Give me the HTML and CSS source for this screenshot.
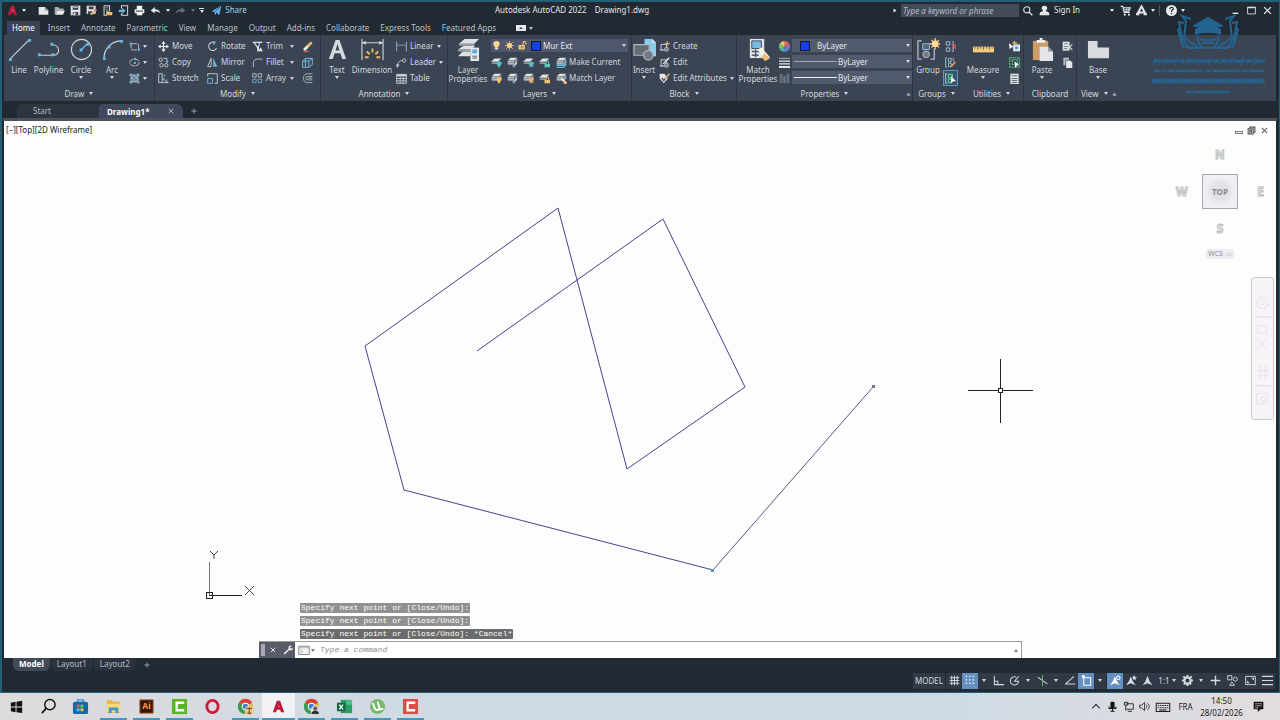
FILE: index.html
```html
<!DOCTYPE html>
<html lang="en">
<head>
<meta charset="utf-8">
<meta name="viewport" content="width=device-width, initial-scale=1">
<title>Autodesk AutoCAD 2022 - Drawing1.dwg</title>
<link rel="stylesheet" href="styles.css">
</head>
<body>
<svg class="sprite" aria-hidden="true">
  <symbol id="new" viewBox="0 0 16 16"><path fill="#e4e7ea" d="M1 3h9l5 5v6H1z"/><path fill="#8d949c" d="M10 3v5h5z"/></symbol>
  <symbol id="open" viewBox="0 0 16 16"><path fill="#aab0b7" d="M1 3h5l2 2h6v3H5l-3 6H1z"/><path fill="#e8eaec" d="M5 8h11l-3 6H2z"/></symbol>
  <symbol id="save" viewBox="0 0 16 16"><path fill="#dfe2e5" d="M1 1h14v14H1z"/><path fill="#39424f" d="M4 2h8v5H4zM4 10h8v5H4z"/><path fill="#dfe2e5" d="M5 11h3v4H5zM5 3h6v1H5z"/></symbol>
  <symbol id="saveas" viewBox="0 0 16 16"><path fill="#dfe2e5" d="M1 1h13v12H1z"/><path fill="#39424f" d="M4 2h7v4H4zM3 9h6v4H3z"/><path stroke="#e8b678" stroke-width="3" d="M7 14l7-7"/><path stroke="#e36a5c" stroke-width="3" d="M13 8l2-2"/></symbol>
  <symbol id="cloudopen" viewBox="0 0 16 16"><path fill="none" stroke="#cfd4d9" stroke-width="1.5" d="M3 1h8v8M3 1v14h4"/><path stroke="#cfd4d9" d="M5 4h4M5 7h4"/><path fill="#e9bd73" d="M6 9h4l1 1h4v5H6z"/></symbol>
  <symbol id="cloudsave" viewBox="0 0 16 16"><path fill="none" stroke="#cfd4d9" stroke-width="1.5" d="M5 5V1h9v14H5v-3"/><path fill="#68b5df" d="M1 7h5V4l5 4-5 5v-3H1z"/></symbol>
  <symbol id="print" viewBox="0 0 16 16"><path fill="#f0f1f2" d="M4 1h8v5H4zM1 6h14v6H1z"/><path fill="#55606c" d="M3 8h10v2H3z"/><path fill="#f0f1f2" d="M4 10h8v5H4z"/></symbol>
  <symbol id="undo" viewBox="0 0 16 16"><path fill="currentColor" d="M1 8l6-5v3c5 0 7 2 8 6-2-2-4-3-8-3v3z"/></symbol>
  <symbol id="redo" viewBox="0 0 16 16"><path fill="currentColor" d="M15 8L9 3v3c-5 0-7 2-8 6 2-2 4-3 8-3v3z"/></symbol>
  <symbol id="plane" viewBox="0 0 16 16"><path fill="#61b2ee" d="M1 9L15 1l-3 14-4-4-2 4-1-5z"/><path stroke="#24445e" d="M6 10l7-7"/></symbol>
  <symbol id="logo" viewBox="0 0 16 16"><path fill="#b91c38" d="M1 15L6 1h4l5 14h-4l-1-3H6l-1 3z"/><path fill="#e34c5d" d="M8 5l2 4H7z"/></symbol>
  <symbol id="mag" viewBox="0 0 16 16"><circle cx="7" cy="7" r="4.5" fill="none" stroke="currentColor" stroke-width="1.6"/><path stroke="currentColor" stroke-width="2" d="M10 10l5 5"/></symbol>
  <symbol id="user" viewBox="0 0 16 16"><path fill="currentColor" d="M8 1c6 0 4 6 2 7 0 2 5 1 5 5v2H1v-2c0-4 5-3 5-5-2-1-4-7 2-7z"/></symbol>
  <symbol id="cart" viewBox="0 0 16 16"><path fill="none" stroke="currentColor" stroke-width="1.6" d="M1 2h3l2 9h8M5 4h10l-2 5H6"/><path stroke="currentColor" d="M6 6.500h8M9 4v5M12 4v5"/><circle cx="7" cy="14" r="1.500" fill="currentColor"/><circle cx="13" cy="14" r="1.500" fill="currentColor"/></symbol>
  <symbol id="aapp" viewBox="0 0 16 16"><path fill="none" stroke="currentColor" stroke-width="3" d="M2 13L8 2l6 11M4 11h8"/><path fill="currentColor" d="M0 12h5v3H0zM11 12h5v3h-5z"/></symbol>
  <symbol id="help" viewBox="0 0 16 16"><circle cx="8" cy="8" r="8" fill="#e9ebed"/><path fill="none" stroke="#27303b" stroke-width="1.800" d="M5.500 6c0-4 6-3 5 0-1 1-2.500 1.500-2.500 4M8 11.500v2"/></symbol>
  <symbol id="close" viewBox="0 0 16 16"><path stroke="currentColor" stroke-width="2.500" d="M2 2l12 12M14 2L2 14"/></symbol>
  <symbol id="max" viewBox="0 0 16 16"><path fill="none" stroke="currentColor" stroke-width="1.500" d="M1 2h14v12H1z"/><path stroke="currentColor" stroke-width="2" d="M1 3h14"/></symbol>
  <symbol id="min" viewBox="0 0 16 16"><path stroke="currentColor" stroke-width="2.500" d="M3 13h10"/></symbol>

  <symbol id="line" viewBox="0 0 24 24"><path stroke="#ccd2d8" stroke-width="1.200" d="M2 22L22 2"/><path fill="#63b6e6" d="M1 21h3v3H1zM21 1h3v3h-3z"/></symbol>
  <symbol id="pline" viewBox="0 0 24 24"><path fill="none" stroke="#ccd2d8" stroke-width="1.200" d="M2 18h15c8 0 7-11-1-11"/><path fill="#63b6e6" d="M1 16h3v3H1zM15 16h3v3h-3zM14 5h3v3h-3z"/></symbol>
  <symbol id="circle" viewBox="0 0 24 24"><circle cx="12" cy="12" r="10.500" fill="none" stroke="#ccd2d8" stroke-width="1.200"/><path stroke="#63b6e6" stroke-width="1.500" d="M12 12l6-6"/><path fill="#63b6e6" d="M10 11h3v3h-3zM17 5h3v3h-3z"/></symbol>
  <symbol id="arc" viewBox="0 0 24 24"><path fill="none" stroke="#ccd2d8" stroke-width="1.200" d="M3 22C3 11 11 3 22 3"/><path fill="#63b6e6" d="M2 20h3v3H2zM7 8h3v3H7zM20 2h3v3h-3z"/></symbol>
  <symbol id="rect" viewBox="0 0 16 16"><path fill="none" stroke="#ccd2d8" stroke-width="1.200" d="M3 4h11v9H3z" stroke-dasharray="9 2"/><path fill="#63b6e6" d="M1 2h3v3H1zM13 11h3v3h-3z"/></symbol>
  <symbol id="ellipse" viewBox="0 0 16 16"><ellipse cx="8" cy="8" rx="7" ry="5" fill="none" stroke="#ccd2d8" stroke-width="1.200" stroke-dasharray="8 1"/><path fill="#63b6e6" d="M7 7h3v3H7zM7 1h3v3H7z"/></symbol>
  <symbol id="hatch" viewBox="0 0 16 16"><path fill="#426b8c" d="M3 3h10v10H3z"/><path fill="none" stroke="#cbe4f4" d="M3 0v16M13 0v16M0 3h16M0 13h16M3 9l6-6M4 13l9-9M9 13l4-4M3 6l7 7M6 3l7 7"/></symbol>
  <symbol id="move" viewBox="0 0 16 16"><path stroke="#edf0f2" stroke-width="1.800" d="M8 2v12M2 8h12"/><path fill="#edf0f2" d="M8 0l3 4H5zM8 16l-3-4h6zM0 8l4-3v6zM16 8l-4 3V5z"/></symbol>
  <symbol id="copy" viewBox="0 0 16 16"><g fill="none" stroke="#ccd2d8" stroke-width="1.300"><circle cx="4" cy="4" r="2.500"/><circle cx="5" cy="12" r="2.500"/><circle cx="12" cy="12" r="2.500"/><path d="M8 2h5v5"/></g><path fill="#63b6e6" d="M10 6h6l-3 3z"/></symbol>
  <symbol id="stretch" viewBox="0 0 16 16"><path fill="none" stroke="#ccd2d8" stroke-width="1.300" d="M1 1h5v13H1zM6 8l9 6H6"/><path stroke="#63b6e6" d="M9 1v9M6 4h5M13 9v6" stroke-dasharray="2 1"/></symbol>
  <symbol id="rotate" viewBox="0 0 16 16"><path fill="none" stroke="#ccd2d8" stroke-width="1.500" d="M7 2a6 6 0 107 8"/><path fill="#73bfe9" d="M7 0l6 1-3 5z"/></symbol>
  <symbol id="mirror" viewBox="0 0 16 16"><path fill="none" stroke="#ccd2d8" stroke-width="1.300" d="M6 2v12H1z"/><path fill="#65b8e7" d="M9 1l6 13H9z"/></symbol>
  <symbol id="scale" viewBox="0 0 16 16"><path fill="none" stroke="#ccd2d8" stroke-width="1.300" d="M1 5V1h14v14h-4"/><path fill="none" stroke="#71bde8" stroke-width="1.300" d="M1 8h7v7H1z"/></symbol>
  <symbol id="trim" viewBox="0 0 16 16"><path stroke="#e0e3e6" stroke-width="1.500" d="M1 2h14M3 2l8 12M11 2L8 15"/><path fill="none" stroke="#eef0f2" stroke-width="2" d="M8 8l2 6h4l-2-4"/></symbol>
  <symbol id="fillet" viewBox="0 0 16 16"><path fill="none" stroke="#bfc6cc" stroke-width="1.300" d="M2 15V9c0-4 3-6 6-6h7"/></symbol>
  <symbol id="array" viewBox="0 0 16 16"><g fill="none" stroke="#b9c2ca" stroke-width="1.300"><path d="M1 1h5v5H1zM9 1h5v5H9z"/><path stroke="#6caed4" d="M1 9h5v5H1zM9 9h5v5H9z"/></g></symbol>
  <symbol id="erase" viewBox="0 0 16 16"><path stroke="#f1bd6a" stroke-width="4" d="M6 10l8-8"/><path stroke="#f0f0ed" stroke-width="4" d="M3 13l5-5"/><path stroke="#e0665a" stroke-width="2" d="M2 15h7"/></symbol>
  <symbol id="explode" viewBox="0 0 16 16"><path fill="none" stroke="#79bce0" stroke-width="1.400" d="M1 6h9v9H1zM1 6l4-4h10v9l-5 4M10 6l5-4M5 2v13"/></symbol>
  <symbol id="offset" viewBox="0 0 16 16"><path fill="none" stroke="#aeb9c3" stroke-width="1.300" d="M15 1H8C0 1 0 14 8 14h7M15 5H9c-5 0-5 5 0 5h6M15 7.500H8"/></symbol>
  <symbol id="textA" viewBox="0 0 24 24"><path fill="#d7dbdf" fill-rule="evenodd" d="M3 22L10 2h4l7 20h-4l-2-6H9l-2 6zM10 13h4l-2-7z"/></symbol>
  <symbol id="dim" viewBox="0 0 24 24"><path fill="none" stroke="#ccd2d8" stroke-width="1.200" d="M1 1v22M23 1v22M1 5h22"/><path fill="#d9dde0" d="M1 5l4-2v4zM23 5l-4-2v4z"/><path stroke="#efb969" stroke-width="2" d="M12 11v4M6 14l3 3M18 14l-3 3M4 20h4M16 20h4"/></symbol>
  <symbol id="linear" viewBox="0 0 16 16"><path fill="none" stroke="#b9c1c8" stroke-width="1.200" d="M1 1v14M15 1v14"/><path stroke="#72b5dc" stroke-width="1.200" d="M2 6h12"/></symbol>
  <symbol id="leader" viewBox="0 0 16 16"><path fill="none" stroke="#ccd2d8" stroke-width="1.300" d="M2 14c0-6 3-8 7-9"/><circle cx="12" cy="5" r="2.500" fill="none" stroke="#ccd2d8" stroke-width="1.300"/><path fill="#ccd2d8" d="M0 11h5l-3 5z"/></symbol>
  <symbol id="table" viewBox="0 0 16 16"><path fill="none" stroke="#ccd2d8" stroke-width="1.300" d="M1 2h14v13H1zM1 8h14M1 11.500h14M6 5v10M10.500 5v10"/><path stroke="#ccd2d8" stroke-width="3" d="M1 3.500h14"/></symbol>
  <symbol id="layers" viewBox="0 0 24 24"><path fill="#e0e3e5" d="M8 1h15l-5 5H2zM7 8h12l-4 4H1zM6 14h8v5H1z"/><path fill="#9ba2a9" d="M2 6h16v2H2zM1 12h13v2H1z"/><path fill="#e6e8ea" d="M14 10h9v14h-9z"/><path fill="#5ea9d6" d="M16 12h5v4h-5z"/><path stroke="#59626e" d="M16 19h5M16 21h5"/></symbol>
  <symbol id="bulb" viewBox="0 0 16 16"><path fill="#ffd58b" d="M8 0c7 0 7 7 3 10v2H5v-2C1 7 1 0 8 0z"/><path fill="#dce0e4" d="M5 12h6v3H5z"/></symbol>
  <symbol id="sun" viewBox="0 0 16 16"><path stroke="#f1b763" stroke-width="1.500" d="M8 0v16M0 8h16M2 2l12 12M14 2L2 14"/><circle cx="8" cy="8" r="4.500" fill="#ffd28a"/></symbol>
  <symbol id="lock" viewBox="0 0 16 16"><path fill="#f6c575" d="M1 7h11v8H1z"/><path fill="none" stroke="#f6c575" stroke-width="2" d="M9 7V4c0-4 5-4 5 0v2"/><path fill="#4c4e55" d="M6 9h2v4H6z"/></symbol>
  <symbol id="layer" viewBox="0 0 16 16"><path fill="#dfe2e5" d="M5 2h10l-5 5H0z"/><path fill="#9ca4ac" d="M1 8h9v2H1z"/></symbol>
  <symbol id="layer2" viewBox="0 0 16 16"><path fill="#dfe2e5" d="M5 1h10l-4 4H1zM1 6h10v2H1zM1 9h10v2H1z"/><path fill="#9ba2a9" d="M12 5l3-3v6l-4 4z"/></symbol>
  <symbol id="a-teal" viewBox="0 0 16 16"><path fill="#4ec9c7" d="M12 6c5 1 4 5 1 7v2h-3v-2C7 10 8 6 12 6z"/></symbol>
  <symbol id="a-pencil" viewBox="0 0 16 16"><path stroke="#e6eaee" stroke-width="2" d="M9 14l5-5"/><path fill="#6c9cb8" d="M8 12h4v3H8z"/></symbol>
  <symbol id="a-star" viewBox="0 0 16 16"><path stroke="#62c6d5" stroke-width="1.500" d="M12 6v9M8 10h8M9 7l6 7M15 7l-6 7"/></symbol>
  <symbol id="a-gold" viewBox="0 0 16 16"><path fill="#f4c26f" d="M12 6c5 1 4 5 1 7v2h-3v-2C7 10 8 6 12 6z"/></symbol>
  <symbol id="a-sun" viewBox="0 0 16 16"><path stroke="#efba6b" stroke-width="1.500" d="M12 6v9M8 10h8M9 7l6 7M15 7l-6 7"/></symbol>
  <symbol id="a-lock" viewBox="0 0 16 16"><path fill="currentColor" d="M8 10h8v5H8z"/><path fill="none" stroke="currentColor" stroke-width="1.500" d="M10 10V8c0-3 4-3 4 0v2"/></symbol>
  <symbol id="a-check" viewBox="0 0 16 16"><path fill="none" stroke="#66b6dc" stroke-width="2" d="M1 12h10l4-5M1 15h10l4-5"/></symbol>
  <symbol id="a-brush" viewBox="0 0 16 16"><path stroke="#f3eee3" stroke-width="3" d="M8 8l7 7"/><path fill="#efb966" d="M12 10l4 5-5 1z"/></symbol>
  <symbol id="insert" viewBox="0 0 24 24"><path fill="#8fcaea" d="M12 1h8l4 4v14H12z"/><path fill="#d5e9f4" d="M20 1v4h4z"/><path fill="#656c76" stroke="#b1b7bd" stroke-width="1.300" d="M1 7h16v11H1z"/><circle cx="16" cy="18" r="5" fill="#727983" stroke="#b1b7bd" stroke-width="1.300"/></symbol>
  <symbol id="create" viewBox="0 0 16 16"><path fill="none" stroke="#ccd2d8" stroke-width="1.400" d="M3 5h8v8H3zM1 13h5"/><circle cx="11" cy="12" r="3" fill="#79828c" stroke="#ccd2d8"/><path stroke="#f4bd68" stroke-width="1.500" d="M12 0v7M8 4h8"/></symbol>
  <symbol id="edit" viewBox="0 0 16 16"><path fill="none" stroke="#ccd2d8" stroke-width="1.400" d="M3 4h8v9H3zM1 13h5"/><circle cx="11" cy="12" r="3" fill="#79828c" stroke="#ccd2d8"/><path stroke="#f1eee8" stroke-width="2" d="M6 10l9-9"/></symbol>
  <symbol id="tag" viewBox="0 0 16 16"><path fill="#e5e7e9" d="M1 1h7l5 7-6 7-6-7z"/><path fill="none" stroke="#424b59" stroke-width="2" d="M4 7l3 4 6-8"/><path stroke="#f0b66a" stroke-width="2" d="M9 9l6-8"/></symbol>
  <symbol id="match" viewBox="0 0 24 24"><path fill="#e1e4e6" d="M3 1h15v20H3z"/><path fill="#76bce0" stroke="#414c5a" d="M5 3h10v8H5z"/><path stroke="#505a66" stroke-width="1.500" d="M5 14h10M5 18h7M9 12v8"/><path fill="#f7f5ec" d="M11 12l4-2 9 10-5 4z"/><path fill="#edbb6d" d="M18 16l6 5-5 3-4-4z"/></symbol>
  <symbol id="wheel" viewBox="0 0 16 16"><path fill="#eb6657" d="M8 8V0a8 8 0 017 4z"/><path fill="#ab64b8" d="M8 8l7-4a8 8 0 010 8z"/><path fill="#5b83d0" d="M8 8l7 4a8 8 0 01-7 4z"/><path fill="#41b6a6" d="M8 8v8a8 8 0 01-7-4z"/><path fill="#76c365" d="M8 8l-7 4a8 8 0 010-8z"/><path fill="#f3c35c" d="M8 8L1 4a8 8 0 017-4z"/></symbol>
  <symbol id="weights" viewBox="0 0 16 16"><path stroke="#e2e5e8" d="M0 2h16"/><path stroke="#e2e5e8" stroke-width="2" d="M0 6h16M0 10h16"/><path stroke="#e2e5e8" stroke-width="3" d="M0 14.500h16"/></symbol>
  <symbol id="dimbars" viewBox="0 0 16 16"><path fill="#66707c" d="M1 1h4v14H1zM6 4h4v11H6zM11 1h4v14h-4z"/></symbol>
  <symbol id="group" viewBox="0 0 24 24"><path fill="none" stroke="#b8bfc6" stroke-width="1.300" d="M5 3H1v19h4M14 22h4V11"/><path fill="#4d6983" stroke="#96bbd5" d="M6 6h7v6H6z"/><circle cx="9.500" cy="17" r="3.500" fill="#747c86" stroke="#b8bfc6"/><path stroke="#f1b967" stroke-width="1.500" d="M19 0v12M13 6h12M15 2l8 8M23 2l-8 8"/><circle cx="19" cy="6" r="3.500" fill="#ffdf9b"/></symbol>
  <symbol id="g1" viewBox="0 0 16 16"><path fill="none" stroke="#9ec7df" stroke-width="1.300" d="M2 1h5v5H2zM2 10h5v5H2zM10 1h2v14h-2"/><path stroke="#e15b67" stroke-width="2" d="M10 5l6 6M16 5l-6 6"/></symbol>
  <symbol id="g2" viewBox="0 0 16 16"><path fill="none" stroke="#9ec7df" stroke-width="1.300" d="M3 1H1v14h2M5 2h4v5H5zM5 9h4v5H5zM12 1v5"/><path stroke="#e69a64" stroke-width="2.500" d="M9 14l6-7"/></symbol>
  <symbol id="g3" viewBox="0 0 16 16"><path fill="none" stroke="#c7d7df" stroke-width="1.300" d="M3 1H1v14h2"/><path fill="none" stroke="#65cc8c" stroke-width="1.500" d="M5 2h4v5H5zM5 9h4v5H5zM11 1v7"/><path fill="#fff" d="M9 5l7 7h-4l-3 3z"/></symbol>
  <symbol id="measure" viewBox="0 0 24 24"><path fill="#f3cc82" d="M1 9h22v6H1z"/><path stroke="#6b5942" d="M3 9v2M6 9v3M9 9v2M12 9v3M15 9v2M18 9v3M21 9v2"/></symbol>
  <symbol id="u1" viewBox="0 0 16 16"><path fill="#dee9ef" d="M6 5h10v10H6z"/><path fill="#559ac2" d="M9 8h4v4H9z"/><path fill="#fff" d="M0 3l7 6H4l-3 3z"/><path stroke="#efb969" stroke-width="2" d="M8 0v5M5 3h7"/></symbol>
  <symbol id="u2" viewBox="0 0 16 16"><path fill="none" stroke="#53be83" stroke-width="1.600" d="M1 1h14v14H1zM5 4v7h7V4z" stroke-dasharray="4 1"/><path fill="#fff" d="M8 6l7 6h-3l-3 4z"/></symbol>
  <symbol id="u3" viewBox="0 0 16 16"><path fill="#e0e3e6" d="M2 1h12v15H2z"/><path stroke="#505a68" stroke-width="1.300" d="M4 4h8M4 8h8M4 11h8M4 14h8"/></symbol>
  <symbol id="paste" viewBox="0 0 24 24"><path fill="#cf9c65" d="M2 3h16v20H2z"/><path fill="#eef0f1" d="M6 2h3V0h3v2h3v3H6z"/><path fill="#e3e5e8" d="M9 9h9l5 5v10H9z"/><path fill="#8c939c" d="M18 9v5h5z"/></symbol>
  <symbol id="cut" viewBox="0 0 16 16"><path fill="#e0e3e6" d="M1 1h10v13H1z"/><path stroke="#4d5764" d="M3 4h6M3 8h6M3 11h5"/><path stroke="#dce1e5" stroke-width="1.500" d="M7 5l8 8M15 5l-8 8"/></symbol>
  <symbol id="copyclip" viewBox="0 0 16 16"><path fill="#bac1c8" d="M2 1h8v3H5v8H2z"/><path fill="#e5e8ea" d="M6 5h6l3 3v8H6z"/></symbol>
  <symbol id="base" viewBox="0 0 24 24"><path fill="#d9dce0" d="M1 3h10v7h12v11H1z"/></symbol>

  <symbol id="grid" viewBox="0 0 16 16"><path stroke="currentColor" stroke-width="1.400" d="M4 1v14M8 1v14M12 1v14M1 4h14M1 8h14M1 12h14"/></symbol>
  <symbol id="dots" viewBox="0 0 16 16"><path stroke="currentColor" stroke-width="2" stroke-dasharray="2 3" d="M1 2h15M1 7h15M1 12h15"/></symbol>
  <symbol id="ortho" viewBox="0 0 16 16"><path fill="none" stroke="currentColor" stroke-width="1.500" d="M2 1v13h14M2 9h5v5"/></symbol>
  <symbol id="polar" viewBox="0 0 16 16"><path fill="none" stroke="currentColor" stroke-width="1.500" d="M10 3a6 6 0 104 6H8l6-7"/></symbol>
  <symbol id="iso" viewBox="0 0 16 16"><path stroke="currentColor" stroke-width="1.500" d="M1 3l14 10"/><path stroke="#69ab79" stroke-width="1.500" d="M8 0v16"/></symbol>
  <symbol id="angle" viewBox="0 0 16 16"><path fill="none" stroke="currentColor" stroke-width="1.500" d="M13 2L1 13h14"/></symbol>
  <symbol id="osnap" viewBox="0 0 16 16"><path fill="none" stroke="currentColor" stroke-width="1.500" d="M4 4h10v11H4z"/><path stroke="currentColor" stroke-width="2" d="M1 2h5M3 0v5"/></symbol>
  <symbol id="anno" viewBox="0 0 16 16"><path fill="currentColor" d="M8 1l3 8 4 6-7-3-7 3 4-6z"/></symbol>
  <symbol id="annodot" viewBox="0 0 16 16"><path fill="currentColor" d="M7 2l3 7 4 6-7-3-7 3 4-6z"/><circle cx="12" cy="4" r="2.500" fill="none" stroke="currentColor" stroke-width="1.500"/></symbol>
  <symbol id="annostar" viewBox="0 0 16 16"><path fill="currentColor" d="M7 2l3 7 4 6-7-3-7 3 4-6z"/><path fill="currentColor" d="M12 0l1 3h3l-2 2v3l-2-2-2 1V4l-1-2h2z"/></symbol>
  <symbol id="gear" viewBox="0 0 16 16"><circle cx="8" cy="8" r="4.500" fill="none" stroke="currentColor" stroke-width="3"/><path stroke="currentColor" stroke-width="3" stroke-dasharray="3 10" d="M8 0v16M0 8h16M2 2l12 12M14 2L2 14"/></symbol>
  <symbol id="plus" viewBox="0 0 16 16"><path stroke="currentColor" stroke-width="2" d="M8 1v14M1 8h14"/></symbol>
  <symbol id="shapes" viewBox="0 0 16 16"><path fill="none" stroke="currentColor" stroke-width="1.300" d="M1 1h6v6H1zM7 10l4 5H4z"/><circle cx="12" cy="6" r="3" fill="none" stroke="currentColor" stroke-width="1.300"/></symbol>
  <symbol id="clean" viewBox="0 0 16 16"><path fill="none" stroke="currentColor" stroke-width="1.400" d="M1 2h14v12H1z"/><path fill="currentColor" d="M9 4h4v4zM3 8l4 4H3z"/></symbol>
  <symbol id="menu" viewBox="0 0 16 16"><path stroke="currentColor" stroke-width="1.700" d="M0 2h16M0 8h16M0 14h16"/></symbol>
  <symbol id="wrench" viewBox="0 0 16 16"><path fill="currentColor" d="M1 13l8-7c-1-3 1-6 5-5l-3 3 2 2 3-2c0 4-3 6-6 4l-7 7z"/></symbol>
  <symbol id="prompt" viewBox="0 0 16 16"><path fill="#f4f4f4" stroke="#868686" stroke-width="1.300" d="M1 3h14v11H1z"/><path fill="none" stroke="#999" d="M1 5h14M3 8l3 2-3 2"/></symbol>
  <symbol id="mdi-max" viewBox="0 0 16 16"><path fill="none" stroke="#555" stroke-width="2" d="M2 5h9v9H2zM5 5V2h9v9h-3M5 8h3v3H5z"/></symbol>

  <symbol id="win" viewBox="0 0 18 18"><path fill="#111" d="M3 5l5-1v5H3zM9 4l6-1v6H9zM3 10h5v5l-5-1zM9 10h6v6l-6-1z"/></symbol>
  <symbol id="search" viewBox="0 0 18 18"><circle cx="10.500" cy="7" r="5.500" fill="none" stroke="#111" stroke-width="1.500"/><path stroke="#111" stroke-width="1.800" d="M6.500 11L2 16"/></symbol>
  <symbol id="store" viewBox="0 0 18 18"><path fill="none" stroke="#2599dc" stroke-width="1.500" d="M6 5V2h6v3"/><rect x="1" y="4" width="16" height="13" rx="2" fill="#1669a5"/><path fill="#e85c42" d="M5 7h3v3H5z"/><path fill="#78c247" d="M9 7h3v3H9z"/><path fill="#54c6ef" d="M5 11h3v3H5z"/><path fill="#fbc548" d="M9 11h3v3H9z"/></symbol>
  <symbol id="files" viewBox="0 0 18 18"><path fill="#e6b747" d="M2 2h5l2 2h7v12H2z"/><path fill="#f8da78" d="M2 6h14v9H2z"/><path fill="#4596c6" d="M4 16v-6h10v6h-3v-3H7v3z"/></symbol>
  <symbol id="ai" viewBox="0 0 18 18"><path fill="#35170e" stroke="#a55529" d="M2 2h14v14H2z"/><text x="9" y="12" text-anchor="middle" fill="#f39b43" font-family="Noto Sans" font-size="9" font-weight="700">Ai</text></symbol>
  <symbol id="camtasia" viewBox="0 0 18 18"><path fill="currentColor" d="M1 1h16v16H1z"/><path fill="none" stroke="#fff" stroke-width="2.500" d="M14 5H6v8h8"/></symbol>
  <symbol id="opera" viewBox="0 0 18 18"><ellipse cx="9" cy="9" rx="6" ry="6.500" fill="none" stroke="#cb1938" stroke-width="3"/></symbol>
  <symbol id="chrome" viewBox="0 0 18 18"><circle cx="9" cy="9" r="8" fill="#ebb737"/><path fill="#d94237" d="M9 9L2 5a8 8 0 0114 0z"/><path fill="#379a59" d="M9 9l-1 8A8 8 0 012 5z"/><circle cx="9" cy="9" r="4" fill="#fff"/><circle cx="9" cy="9" r="3" fill="#3f7fc3"/></symbol>
  <symbol id="avatar1" viewBox="0 0 18 18"><circle cx="13" cy="13" r="5" fill="#e9c895"/><path stroke="#765129" stroke-width="1.200" d="M10 11h6M13 10v7M11 16h4"/></symbol>
  <symbol id="avatar2" viewBox="0 0 18 18"><circle cx="13" cy="13" r="5" fill="#d4d8dc"/><circle cx="13" cy="11" r="2" fill="#745648"/><path fill="#293443" d="M9 17c0-5 8-5 8 0z"/></symbol>
  <symbol id="excel" viewBox="0 0 18 18"><path fill="#2d9d68" d="M5 2h12v14H5z"/><path fill="#57bc8c" d="M11 2h6v5h-6z"/><path fill="#15693f" d="M1 5h9v9H1z"/><path stroke="#fff" stroke-width="1.500" d="M3.500 7l4 5M7.500 7l-4 5"/></symbol>
  <symbol id="torrent" viewBox="0 0 18 18"><circle cx="9" cy="9" r="8" fill="#76b96d"/><path fill="none" stroke="#fff" stroke-width="2" d="M4 5l2 6c2 3 5 2 5-1L9 4M11 10c0 3 3 2 4 1"/></symbol>
  <symbol id="mic" viewBox="0 0 16 16"><rect x="5" y="1" width="6" height="10" rx="2" fill="#111"/><path fill="none" stroke="#111" stroke-width="1.500" d="M3 8v3h10V8M8 11v4M5 15h6"/></symbol>
  <symbol id="net" viewBox="0 0 16 16"><path fill="none" stroke="#222" stroke-width="1.300" d="M5 4h10v8H5M2 2h5v4H2zM4 6v8M7 15h6"/></symbol>
  <symbol id="sound" viewBox="0 0 16 16"><path fill="none" stroke="#222" stroke-width="1.200" d="M1 6h3l4-4v12l-4-4H1zM10 5c2 2 2 4 0 6M12 3c4 3 4 7 0 10"/></symbol>
  <symbol id="keys" viewBox="0 0 20 16"><path fill="none" stroke="#222" stroke-width="1.400" d="M1 3h18v11H1z"/><path stroke="#222" stroke-width="1.500" stroke-dasharray="2 1" d="M3 6h14M3 9h14"/><path stroke="#222" stroke-width="1.500" d="M5 12h10"/></symbol>
  <symbol id="note" viewBox="0 0 16 16"><path fill="#111" d="M1 1h14v11h-4l-4 4v-4H1z"/><path stroke="#ddd" d="M3 4h10M3 7h10M3 10h5"/></symbol>
</svg>

<div class="app">
  <header class="titlebar">
    <div class="quick">
      <button class="logo" aria-label="Application menu"><svg><use href="#logo"/></svg><i class="caret"></i></button>
      <button aria-label="New"><svg><use href="#new"/></svg></button>
      <button aria-label="Open"><svg><use href="#open"/></svg></button>
      <button aria-label="Save"><svg><use href="#save"/></svg></button>
      <button aria-label="Save as"><svg><use href="#saveas"/></svg></button>
      <button aria-label="Open from web"><svg><use href="#cloudopen"/></svg></button>
      <button aria-label="Save to web"><svg><use href="#cloudsave"/></svg></button>
      <button aria-label="Plot"><svg><use href="#print"/></svg></button>
      <button aria-label="Undo"><svg><use href="#undo"/></svg></button>
      <button class="slim" aria-label="Undo history"><i class="caret"></i></button>
      <button class="faded" aria-label="Redo"><svg><use href="#redo"/></svg></button>
      <button class="slim faded" aria-label="Redo history"><i class="caret"></i></button>
      <button class="slim bar" aria-label="Customize toolbar"><i class="caret"></i></button>
      <button class="share"><svg><use href="#plane"/></svg>Share</button>
    </div>
    <h1>Autodesk AutoCAD 2022 <span>Drawing1.dwg</span></h1>
    <div class="account">
      <i class="caret side"></i>
      <input type="text" aria-label="Search help" placeholder="Type a keyword or phrase">
      <button class="w17" aria-label="Search"><svg><use href="#mag"/></svg></button>
      <button class="signin"><svg><use href="#user"/></svg>Sign In<i class="caret"></i></button>
      <button class="w17" aria-label="App store"><svg><use href="#cart"/></svg></button>
      <button class="pair" aria-label="Autodesk apps"><svg><use href="#aapp"/></svg><i class="caret"></i></button>
      <button class="pair help" aria-label="Help"><svg><use href="#help"/></svg><i class="caret"></i></button>
    </div>
    <div class="winbtns">
      <button aria-label="Minimize"><svg><use href="#min"/></svg></button>
      <button aria-label="Maximize"><svg><use href="#max"/></svg></button>
      <button aria-label="Close"><svg><use href="#close"/></svg></button>
    </div>
  </header>

  <nav class="tabs">
    <a href="#" class="on">Home</a><a href="#">Insert</a><a href="#">Annotate</a><a href="#">Parametric</a><a href="#">View</a><a href="#">Manage</a><a href="#">Output</a><a href="#">Add-ins</a><a href="#">Collaborate</a><a href="#">Express Tools</a><a href="#">Featured Apps</a>
    <button aria-label="Ribbon display"><span class="up"></span><i class="caret"></i></button>
  </nav>

  <div class="ribbon">
    <section class="panel draw">
      <div class="body">
        <button class="big b1"><svg><use href="#line"/></svg>Line</button>
        <button class="big b2"><svg><use href="#pline"/></svg>Polyline</button>
        <button class="big b3"><svg><use href="#circle"/></svg>Circle<i class="caret"></i></button>
        <button class="big b4"><svg><use href="#arc"/></svg>Arc<i class="caret"></i></button>
        <div class="col">
          <button class="sm" aria-label="Rectangle"><svg><use href="#rect"/></svg><i class="caret"></i></button>
          <button class="sm" aria-label="Ellipse"><svg><use href="#ellipse"/></svg><i class="caret"></i></button>
          <button class="sm" aria-label="Hatch"><svg><use href="#hatch"/></svg><i class="caret"></i></button>
        </div>
      </div>
      <h2>Draw<i class="caret"></i></h2>
    </section>
    <section class="panel modify">
      <div class="body">
        <div class="col c1">
          <button class="sm"><svg><use href="#move"/></svg>Move</button>
          <button class="sm"><svg><use href="#copy"/></svg>Copy</button>
          <button class="sm"><svg><use href="#stretch"/></svg>Stretch</button>
        </div>
        <div class="col c2">
          <button class="sm"><svg><use href="#rotate"/></svg>Rotate</button>
          <button class="sm"><svg><use href="#mirror"/></svg>Mirror</button>
          <button class="sm"><svg><use href="#scale"/></svg>Scale</button>
        </div>
        <div class="col c3">
          <button class="sm spread"><svg><use href="#trim"/></svg>Trim<i class="caret"></i></button>
          <button class="sm spread"><svg><use href="#fillet"/></svg>Fillet<i class="caret"></i></button>
          <button class="sm spread"><svg><use href="#array"/></svg>Array<i class="caret"></i></button>
        </div>
        <div class="col">
          <button class="sm" aria-label="Erase"><svg><use href="#erase"/></svg></button>
          <button class="sm" aria-label="Explode"><svg><use href="#explode"/></svg></button>
          <button class="sm" aria-label="Offset"><svg><use href="#offset"/></svg></button>
        </div>
      </div>
      <h2>Modify<i class="caret"></i></h2>
    </section>
    <section class="panel annotation">
      <div class="body">
        <button class="big b5"><svg><use href="#textA"/></svg>Text<i class="caret"></i></button>
        <button class="big b6"><svg><use href="#dim"/></svg>Dimension</button>
        <div class="col">
          <button class="sm"><svg><use href="#linear"/></svg>Linear<i class="caret"></i></button>
          <button class="sm"><svg><use href="#leader"/></svg>Leader<i class="caret"></i></button>
          <button class="sm"><svg><use href="#table"/></svg>Table</button>
        </div>
      </div>
      <h2>Annotation<i class="caret"></i></h2>
    </section>
    <section class="panel layerspanel">
      <div class="body">
        <button class="big b7"><svg><use href="#layers"/></svg>Layer<br>Properties</button>
        <div class="col grow">
          <div class="combo layercombo">
            <svg><use href="#bulb"/></svg><svg><use href="#sun"/></svg><svg><use href="#lock"/></svg><span class="swatch"></span>
            <select aria-label="Layer"><option>Mur Ext</option></select><i class="caret"></i>
          </div>
          <div class="row">
            <button aria-label="Layer off"><svg><use href="#layer"/><use href="#a-teal"/></svg></button>
            <button aria-label="Isolate"><svg><use href="#layer2"/><use href="#a-pencil"/></svg></button>
            <button aria-label="Freeze"><svg><use href="#layer"/><use href="#a-star"/></svg></button>
            <button class="teal" aria-label="Lock layer"><svg><use href="#layer"/><use href="#a-lock"/></svg></button>
            <button class="sm"><svg><use href="#layer2"/><use href="#a-check"/></svg>Make Current</button>
          </div>
          <div class="row">
            <button aria-label="All layers on"><svg><use href="#layer2"/><use href="#a-gold"/></svg></button>
            <button aria-label="Unisolate"><svg><use href="#layer2"/><use href="#a-pencil"/></svg></button>
            <button aria-label="Thaw"><svg><use href="#layer2"/><use href="#a-sun"/></svg></button>
            <button class="gold" aria-label="Unlock layer"><svg><use href="#layer"/><use href="#a-lock"/></svg></button>
            <button class="sm"><svg><use href="#layer2"/><use href="#a-brush"/></svg>Match Layer</button>
          </div>
        </div>
      </div>
      <h2>Layers<i class="caret"></i></h2>
    </section>
    <section class="panel block">
      <div class="body">
        <button class="big b8"><svg><use href="#insert"/></svg>Insert<i class="caret"></i></button>
        <div class="col">
          <button class="sm"><svg><use href="#create"/></svg>Create</button>
          <button class="sm"><svg><use href="#edit"/></svg>Edit</button>
          <button class="sm"><svg><use href="#tag"/></svg>Edit Attributes<i class="caret"></i></button>
        </div>
      </div>
      <h2>Block<i class="caret"></i></h2>
    </section>
    <section class="panel properties">
      <div class="body">
        <button class="big b9"><svg><use href="#match"/></svg>Match<br>Properties</button>
        <div class="col tight">
          <button class="sm" aria-label="Color"><svg><use href="#wheel"/></svg></button>
          <button class="sm" aria-label="Lineweight"><svg><use href="#weights"/></svg></button>
          <button class="sm" aria-label="Linetype"><svg><use href="#dimbars"/></svg></button>
        </div>
        <div class="col grow">
          <div class="combo color"><span class="swatch"></span><select aria-label="Object color"><option>ByLayer</option></select><i class="caret"></i></div>
          <div class="combo"><span class="rule thin"></span><select aria-label="Object lineweight"><option>ByLayer</option></select><i class="caret"></i></div>
          <div class="combo"><span class="rule"></span><select aria-label="Object linetype"><option>ByLayer</option></select><i class="caret"></i></div>
        </div>
      </div>
      <h2>Properties<i class="caret"></i><span class="launch">»</span></h2>
    </section>
    <section class="panel groups">
      <div class="body">
        <button class="big b10"><svg><use href="#group"/></svg>Group</button>
        <div class="col">
          <button class="sm" aria-label="Ungroup"><svg><use href="#g1"/></svg></button>
          <button class="sm" aria-label="Group edit"><svg><use href="#g2"/></svg></button>
          <button class="sm pressed" aria-label="Group selection"><svg><use href="#g3"/></svg></button>
        </div>
      </div>
      <h2>Groups<i class="caret"></i></h2>
    </section>
    <section class="panel utilities">
      <div class="body">
        <button class="big b11"><svg><use href="#measure"/></svg>Measure<i class="caret"></i></button>
        <div class="col">
          <button class="sm" aria-label="Quick select"><svg><use href="#u1"/></svg></button>
          <button class="sm" aria-label="Select all"><svg><use href="#u2"/></svg></button>
          <button class="sm" aria-label="Calculator"><svg><use href="#u3"/></svg></button>
        </div>
      </div>
      <h2>Utilities<i class="caret"></i></h2>
    </section>
    <section class="panel clipboard">
      <div class="body">
        <button class="big b12"><svg><use href="#paste"/></svg>Paste<i class="caret"></i></button>
        <div class="col">
          <button class="sm" aria-label="Cut"><svg><use href="#cut"/></svg></button>
          <button class="sm" aria-label="Copy clip"><svg><use href="#copyclip"/></svg></button>
        </div>
      </div>
      <h2>Clipboard</h2>
    </section>
    <section class="panel view">
      <div class="body">
        <button class="big b13"><svg><use href="#base"/></svg>Base<i class="caret"></i></button>
      </div>
      <h2>View<i class="caret"></i><span class="launch">»</span></h2>
    </section>
  </div>

  <svg class="emblem" viewBox="0 0 116 84" role="img" aria-label="Academy emblem">
    <path fill="#23638f" d="M58 2l16 9-16 4-16-4zM45 14c8-4 18-4 26 0v6c-8-3-18-3-26 0z"/>
    <g fill="none" stroke="#23638f" stroke-width="2">
      <path d="M48 21c-1 9 3 12 10 12s11-3 10-12M50 24c5 2 11 2 16 0M52 28h12"/>
      <path d="M41 4l-9-3 4 5-2 17 14 9M75 4l9-3-4 5 2 17-14 9"/>
      <path d="M34 8l-5-1 3 16 7 10h13M82 8l5-1-3 16-7 10H64M30 13l-2 2 5 17h7M86 13l2 2-5 17h-7"/>
    </g>
    <g stroke="#27618c" fill="none">
      <path stroke-width="3" opacity=".45" d="M3 46h112M4 56h110M36 77h44"/>
      <path stroke-width="6" opacity=".5" d="M3 66h112"/>
      <path stroke-width="3" d="M3 46h112" stroke-dasharray="7 1 3 1 12 2 5 3"/>
      <path stroke-width="1" d="M4 43h110M2 49h110" stroke-dasharray="2 5 1 3 4 7"/>
      <path stroke-width="2" d="M4 56h110" stroke-dasharray="6 2 2 5 4 3 14 1"/>
      <path stroke-width="4" d="M2 66h112" stroke-dasharray="4 1 6 1 3 1"/>
      <path stroke-width="2" d="M36 77h44" stroke-dasharray="6 2 2 1 9 1"/>
    </g>
  </svg>

  <nav class="filetabs">
    <a href="#" class="start">Start</a>
    <a href="#" class="on"><b>Drawing1*</b><svg><use href="#close"/></svg></a>
    <button aria-label="New drawing"><svg><use href="#plus"/></svg></button>
  </nav>

  <main class="canvas">
    <svg class="drawing" viewBox="4 121 1272 537" aria-label="Polyline drawing">
      <g fill="none">
        <path stroke="#41468c" d="M477 351L663 219L745 387L627 469L558 208L365 346L404 490L713 570"/>
        <path stroke="#5b5785" d="M713 570L873 387"/>
      </g>
      <g fill="none" shape-rendering="crispEdges">
        <path stroke="#222" d="M968 390.500h65M1000.500 359v64"/>
        <path stroke="#222" fill="#fff" d="M998.500 388.500h4v4h-4z"/>
        <path stroke="#777" d="M209.500 562v33"/>
        <path stroke="#222" d="M209 595.500h33M206.500 592.500h6v6h-6z"/>
      </g>
      <path fill="none" stroke="#444" d="M210 551l4 4l4-4M214 555v4M245 586l9 9M254 586l-9 9"/>
      <path fill="#4c9fb0" d="M711 569h3v3h-3z"/><path fill="#777" d="M872 385h3v3h-3z"/>
    </svg>
    <p class="viewlabel">[−][Top][2D Wireframe]</p>
    <div class="mdi">
      <button aria-label="Minimize drawing"><span class="dash"></span></button>
      <button aria-label="Restore drawing"><svg><use href="#mdi-max"/></svg></button>
      <button aria-label="Close drawing"><svg><use href="#close"/></svg></button>
    </div>
    <div class="cube">
      <span class="n">N</span><span class="w">W</span><button>TOP</button><span class="e">E</span><span class="s">S</span>
      <span class="wcs">WCS <i>▭</i></span>
    </div>
    <div class="navbar">
      <svg viewBox="0 0 22 142" aria-hidden="true"><g fill="none" stroke="#eadde8"><circle cx="11" cy="23" r="6"/><circle cx="11" cy="23" r="2"/><path stroke="#ddd4dc" d="M3 38h17M3 110h17"/><path d="M6 47h9v8H6zM3 59l14 14M17 59L3 73M5 94h13M5 99h13M9 88v16M14 88v16M5 118h11v11H5zM9 122h4v4H9z"/></g></svg>
    </div>
    <div class="cmd">
      <output>Specify next point or [Close/Undo]:</output>
      <output>Specify next point or [Close/Undo]:</output>
      <output class="last">Specify next point or [Close/Undo]: *Cancel*</output>
      <div class="cmdline">
        <div class="grip"><span></span><button aria-label="Close command line"><svg><use href="#close"/></svg></button><button aria-label="Customize"><svg><use href="#wrench"/></svg></button></div>
        <button class="prompt" aria-label="Recent commands"><svg><use href="#prompt"/></svg><i class="caret"></i></button>
        <input type="text" aria-label="Command" placeholder="Type a command">
        <i class="caret upward"></i>
      </div>
    </div>
  </main>

  <nav class="layouts">
    <a href="#" class="on">Model</a><a href="#">Layout1</a><a href="#">Layout2</a><button aria-label="New layout"><svg><use href="#plus"/></svg></button>
  </nav>

  <div class="status">
    <button class="model">MODEL</button>
    <button aria-label="Grid"><svg><use href="#grid"/></svg></button>
    <button class="on" aria-label="Snap"><svg><use href="#dots"/></svg></button>
    <button class="thin" aria-label="Snap options"><i class="caret"></i></button>
    <button aria-label="Ortho"><svg><use href="#ortho"/></svg></button>
    <button aria-label="Polar"><svg><use href="#polar"/></svg></button>
    <button class="thin" aria-label="Polar options"><i class="caret"></i></button>
    <button aria-label="Isodraft"><svg><use href="#iso"/></svg></button>
    <button class="thin" aria-label="Isodraft options"><i class="caret"></i></button>
    <button aria-label="Object snap tracking"><svg><use href="#angle"/></svg></button>
    <button class="on" aria-label="Object snap"><svg><use href="#osnap"/></svg></button>
    <button class="thin" aria-label="Snap modes"><i class="caret"></i></button>
    <button class="on gapl" aria-label="Annotation visibility"><svg><use href="#annodot"/></svg></button>
    <button aria-label="Auto scale"><svg><use href="#annostar"/></svg></button>
    <button aria-label="Annotation scale"><svg><use href="#anno"/></svg></button>
    <button class="ratio">1:1<i class="caret"></i></button>
    <button aria-label="Workspace"><svg><use href="#gear"/></svg></button>
    <button class="thin" aria-label="Workspace options"><i class="caret"></i></button>
    <button aria-label="Annotation monitor"><svg><use href="#plus"/></svg></button>
    <button class="wide" aria-label="Isolate objects"><svg><use href="#shapes"/></svg></button>
    <button class="wide" aria-label="Clean screen"><svg><use href="#clean"/></svg></button>
    <button aria-label="Customization"><svg><use href="#menu"/></svg></button>
  </div>
</div>

<footer class="taskbar">
  <div class="apps">
    <button aria-label="Start menu"><svg><use href="#win"/></svg></button>
    <button aria-label="Search"><svg><use href="#search"/></svg></button>
    <button aria-label="Store"><svg><use href="#store"/></svg></button>
    <button class="open" aria-label="File Explorer"><svg><use href="#files"/></svg></button>
    <button class="open" aria-label="Illustrator"><svg><use href="#ai"/></svg></button>
    <button class="open green" aria-label="Camtasia"><svg><use href="#camtasia"/></svg></button>
    <button aria-label="Opera"><svg><use href="#opera"/></svg></button>
    <button class="open" aria-label="Chrome"><svg><use href="#chrome"/><use href="#avatar1"/></svg></button>
    <button class="open current" aria-label="AutoCAD"><svg><use href="#logo"/></svg></button>
    <button class="open" aria-label="Chrome profile"><svg><use href="#chrome"/><use href="#avatar2"/></svg></button>
    <button class="open" aria-label="Excel"><svg><use href="#excel"/></svg></button>
    <button class="open" aria-label="uTorrent"><svg><use href="#torrent"/></svg></button>
    <button class="open red" aria-label="Camtasia recorder"><svg><use href="#camtasia"/></svg></button>
  </div>
  <div class="tray">
    <button aria-label="Show hidden icons"><span class="chev"></span></button>
    <button aria-label="Microphone"><svg><use href="#mic"/></svg></button>
    <button aria-label="Network"><svg><use href="#net"/></svg></button>
    <button aria-label="Volume"><svg><use href="#sound"/></svg></button>
    <button class="kb" aria-label="Keyboard"><svg><use href="#keys"/></svg></button>
    <button class="lang">FRA</button>
    <time datetime="2026-02-28T14:50">14:50<br>28/02/2026</time>
    <button class="bell" aria-label="Notifications"><svg><use href="#note"/></svg></button>
  </div>
</footer>
</body>
</html>
```
FILE: styles.css
```css
* { box-sizing: border-box; }
body {
  margin: 0;
  height: 100vh;
  display: flex;
  flex-direction: column;
  overflow: hidden;
  background: #212933;
  color: #d3d8dd;
  font: 8px/12px "Noto Sans", "Open Sans", sans-serif;
}
button, input, select { font: inherit; color: inherit; border: 0; padding: 0; margin: 0; background: none; }
button { display: flex; align-items: center; justify-content: center; white-space: nowrap; }
a { color: inherit; text-decoration: none; }
h1, h2, p { margin: 0; font-size: inherit; font-weight: inherit; }
svg { display: block; width: 12px; height: 12px; flex: none; overflow: visible; }
.sprite { position: absolute; width: 0; height: 0; }
.caret { flex: none; width: 0; height: 0; border: 2px solid transparent; border-top: 3px solid currentColor; border-bottom: 0; }

.app {
  flex: 1;
  min-height: 0;
  position: relative;
  display: flex;
  flex-direction: column;
  border: solid #236078;
  border-width: 2px 1px 1px 2px;
  padding: 0 3px 0 2px;
}

/* Title bar */
.titlebar { height: 19px; flex: none; display: flex; align-items: center; padding-bottom: 3px; color: #e3e6e9; }
.quick { display: flex; align-items: center; flex: 0 0 488px; }
.quick button { width: 16px; }
.quick svg { width: 11px; height: 11px; }
.quick .logo { width: 31px; gap: 4px; justify-content: flex-start; padding-left: 3px; }
.quick .slim { width: 9px; }
.quick .faded { color: #68717b; }
.quick .bar { flex-direction: column; gap: 1px; }
.quick .bar::before { content: ""; width: 5px; height: 1px; background: currentColor; }
.quick .share { width: 38px; gap: 3px; margin-left: 4px; color: #9bd3f5; }
.titlebar h1 { flex: 1; padding-left: 3px; white-space: nowrap; }
.titlebar h1 span { margin-left: 6px; }
.account { display: flex; align-items: center; margin-right: 40px; }
.account .side { transform: rotate(-90deg); margin-right: 4px; }
.account input { width: 118px; height: 13px; background: #434b59; padding: 0 2px; font-style: italic; }
.account input::placeholder { color: #b6bcc5; opacity: 1; }
.account svg { width: 11px; height: 11px; }
.w17 { width: 17px; }
.signin { width: 81px; gap: 4px; justify-content: flex-start; padding-left: 3px; }
.signin .caret { margin-left: auto; margin-right: 3px; }
.pair { width: 22px; gap: 4px; margin-right: 3px; }
.pair.help { width: 28px; border-left: 1px solid #4e5762; padding-left: 4px; margin: 0; }
.winbtns { display: flex; margin-right: 1px; }
.winbtns button { width: 16px; }
.winbtns svg { width: 9px; height: 9px; }

/* Ribbon tabs */
.tabs { height: 14px; flex: none; display: flex; padding-left: 3px; color: #b9c0c7; }
.tabs a { padding: 1px 5px 0; margin-right: 1px; white-space: nowrap; }
.tabs .on { background: #3b4452; color: #fff; margin-right: 3px; }
.tabs button { gap: 3px; margin-left: 14px; }
.up { width: 10px; height: 6px; background: #e7e9eb; display: grid; place-items: center; }
.up::after { content: ""; border: 2px solid transparent; border-top: 0; border-bottom-color: #39424f; }

/* Ribbon */
.ribbon { flex: none; height: 66px; display: flex; background: #3b4452; }
.panel { flex: none; display: flex; flex-direction: column; border-right: 1px solid #2d3642; padding-top: 3px; }
.panel .body { display: flex; height: 49px; }
.panel h2 { display: flex; align-items: center; justify-content: center; gap: 5px; height: 13px; white-space: nowrap; position: relative; }
.launch { font-size: 8px; transform: rotate(45deg); }
.properties .launch { position: absolute; right: 1px; }
.big { flex-direction: column; justify-content: flex-start; line-height: 9px; height: 48px; text-align: center; }
.big svg { width: 23px; height: 23px; margin-bottom: 4px; }
.big .caret { margin-top: 2px; }
.col { display: flex; flex-direction: column; }
.grow { flex: 1; min-width: 0; }
.sm { height: 16px; gap: 3px; justify-content: flex-start; }
.sm svg, .row svg { width: 11px; height: 11px; }
.draw { width: 151px; }
.b1 { width: 30px; } .b2 { width: 29px; } .b3 { width: 36px; } .b4 { width: 26px; }
.draw .col { margin-left: 4px; }
.modify { width: 166px; }
.modify .body { padding-left: 3px; }
.c1 { width: 49px; } .c2 { width: 45px; } .c3 { width: 50px; }
.spread { width: 42px; }
.spread .caret { margin-left: auto; }
.annotation { width: 127px; }
.b5 { width: 32px; } .b6 { width: 38px; }
.annotation .col { margin-left: 5px; }
.layerspanel { width: 184px; }
.b7 { width: 40px; }
.layerspanel .grow { margin: 0 3px; }
.row { display: flex; height: 16px; }
.row button { width: 16px; }
.row .sm { width: auto; gap: 2px; }
.row button:not(.sm) { justify-content: flex-start; }
.teal { color: #58c9b9; }
.gold { color: #f2bf6c; }
.row .sm { padding-left: 1px; }
.combo { display: flex; align-items: center; height: 13px; margin: 1px 0 2px; padding-right: 2px; background: #515b6d; min-width: 0; }
.combo select { appearance: none; flex: 1; min-width: 0; color: #e6e9ec; }
.layercombo { background: #4e576d; gap: 4px; }
.layercombo svg { width: 9px; height: 9px; }
.layercombo svg:first-child { margin-left: 1px; }
.swatch { width: 10px; height: 10px; flex: none; background: #1641e5; border: 1px solid #11182c; }
.layercombo .swatch { margin-right: -2px; }
.block { width: 105px; }
.b8 { width: 24px; }
.block .col { margin-left: 3px; }
.properties { width: 176px; }
.b9 { width: 42px; }
.tight { width: 13px; }
.combo.color { padding-left: 8px; gap: 7px; }
.rule { width: 43px; height: 1px; background: #edf0f2; margin: 0 1px 0 2px; flex: none; }
.rule.thin { background: #9fa6b0; }
.groups { width: 47px; border-right: 0; }
.b10 { width: 30px; }
.pressed { background: #36566e; outline: 1px solid #6097bd; outline-offset: -1px; }
.groups .sm { width: 15px; justify-content: center; }
.utilities { width: 64px; }
.b11 { width: 46px; }
.utilities .col { margin-left: 3px; }
.clipboard { width: 53px; }
.b12 { width: 36px; }
.clipboard .col { margin-left: 2px; }
.view { flex: 1; border-right: 0; }
.b13 { width: 42px; }
.view h2 { justify-content: flex-start; padding-left: 4px; }
.emblem { position: absolute; top: 13px; right: 13px; width: 116px; height: 84px; pointer-events: none; }

/* Drawing tabs */
.filetabs { height: 20px; flex: none; display: flex; padding-top: 3px; border-bottom: 3px solid #4b525d; margin: 0 -1px; }
.filetabs a { height: 14px; line-height: 13px; padding: 0 16px; background: #2c3541; color: #b4bbc3; }
.filetabs .start { width: 82px; margin-left: 14px; border-radius: 6px 0 0 0; }
.filetabs .on { display: flex; align-items: center; justify-content: space-between; width: 84px; padding: 0 9px 0 8px; background: #404959; color: #fff; border-radius: 3px 6px 0 0; }
.filetabs svg { width: 6px; height: 6px; color: #b6bdc5; }
.filetabs button { width: 18px; height: 13px; margin-left: 2px; }

/* Drawing area */
.canvas { flex: 1; min-height: 0; position: relative; background: #fdfdfe; color: #222; }
.drawing { width: 100%; height: 100%; }
.viewlabel { position: absolute; left: 2px; top: 3px; }
.mdi { position: absolute; right: 5px; top: 4px; display: flex; color: #666; }
.mdi button { width: 13px; height: 11px; }
.mdi svg { width: 9px; height: 9px; }
.mdi button:last-child svg { width: 7px; height: 7px; }
.dash { width: 8px; height: 3px; border: 1px solid #777; margin-top: 4px; }
.cube {
  position: absolute; right: 12px; top: 25px; width: 88px;
  display: grid; grid-template: 17px 57px 17px 34px / 26px 36px 26px;
  place-items: center;
  font-size: 12px; font-weight: 700; color: #f3f3f3;
  -webkit-text-stroke: 1px #bbb;
}
.n, .s, .wcs { grid-column: 2; }
.n { grid-row: 1; } .w, .cube button, .e { grid-row: 2; } .s { grid-row: 3; }
.w { grid-column: 1; justify-self: start; } .e { grid-column: 3; justify-self: end; }
.cube button { grid-column: 2; width: 36px; height: 35px; background: radial-gradient(#e2e2e7 35%, #f0f0f4 65%); border: 1px solid #a8a8ac; font-size: 8px; color: #8a8a8e; -webkit-text-stroke: 0; }
.wcs { grid-row: 4; font-size: 7px; font-weight: 400; line-height: 10px; padding: 0 2px; white-space: nowrap; background: #ececf2; color: #8e8e98; -webkit-text-stroke: 0; border-radius: 2px; }
.wcs i { color: #c4c4cc; }
.navbar { position: absolute; right: 2px; top: 156px; width: 23px; height: 143px; background: #f7f4f8; border: 1px solid #ccc8ce; border-radius: 3px; }
.navbar svg { width: 21px; height: 141px; }

/* Command line */
.cmd { position: absolute; left: 255px; bottom: 0; width: 60%; display: flex; flex-direction: column; align-items: flex-start; font-family: "Liberation Mono", monospace; }
.cmd output { margin: 0 0 3px 41px; padding: 0 1px; line-height: 10px; background: #919191; color: #fff; white-space: pre; border-radius: 1px; }
.cmd .last { background: #6b6b6b; margin-bottom: 2px; }
.cmdline { width: 100%; height: 17px; display: flex; align-items: center; background: #fff; border: solid #999; border-width: 1px 1px 0 0; }
.grip { width: 36px; align-self: stretch; display: flex; align-items: center; background: #595b68; color: #eee; }
.grip span { width: 4px; height: 12px; background: #a7a8b2; margin-left: 2px; }
.grip button { width: 15px; }
.grip svg { width: 6px; height: 6px; }
.grip button:last-child svg { width: 10px; height: 10px; }
.prompt { gap: 1px; width: 22px; color: #777; }
.cmdline input { flex: 1; margin-left: 3px; font-style: italic; }
.cmdline input::placeholder { color: #8d8d8d; opacity: 1; }
.upward { transform: rotate(180deg); margin-right: 3px; color: #777; }

/* Layout tabs and status bar */
.layouts { height: 13px; flex: none; display: flex; padding-left: 9px; color: #b7bfc7; }
.layouts a { padding: 0 6px; margin-right: 1px; background: #29323d; border-radius: 0 0 6px 6px; }
.layouts .on { background: #404a59; color: #fff; font-weight: 700; }
.layouts button { width: 20px; }
.layouts svg { width: 6px; height: 6px; }
.status { height: 21px; flex: none; display: flex; align-items: center; justify-content: flex-end; color: #d6dbe0; padding: 0 1px 2px 0; }
.status button { height: 16px; width: 16px; background: #303945; }
.status svg { width: 11px; height: 11px; }
.status .model { width: 32px; margin-right: 1px; }
.status .thin { width: 12px; }
.status .wide { width: 18px; }
.status .ratio { width: 24px; gap: 2px; }
.status .gapl { margin-left: 1px; }
.status .on { background: #638fc1; color: #fff; }

/* Taskbar */
.taskbar { flex: none; height: 27px; display: flex; justify-content: space-between; background: linear-gradient(90deg, #dedbdd, #cedae4 35%, #cfdbe4 75%, #e3dcdf); color: #222; }
.apps { display: flex; }
.apps button { width: 33px; position: relative; }
.apps button:nth-child(-n+2) { width: 32px; }
.apps svg { width: 17px; height: 17px; }
.apps .current { background: linear-gradient(90deg, #f5f0f3, #edf2f7); }
.apps .current svg { width: 13px; height: 13px; }
.open::after { content: ""; position: absolute; bottom: 0; left: 3px; right: 3px; height: 2px; background: #4396bd; }
.current::after { left: 0; right: 0; }
.green { color: #5bb524; }
.red { color: #df4b48; }
.tray { display: flex; align-items: center; }
.tray button { width: 16px; }
.tray svg { width: 11px; height: 11px; }
.tray .kb { width: 22px; }
.kb svg { width: 16px; height: 12px; }
.tray .lang { width: 23px; }
.tray time { width: 49px; text-align: center; line-height: 12px; }
.tray .bell { width: 25px; margin-right: 9px; }
.chev { width: 6px; height: 6px; border: solid #222; border-width: 1px 0 0 1px; transform: rotate(45deg); margin-top: 3px; }
```
